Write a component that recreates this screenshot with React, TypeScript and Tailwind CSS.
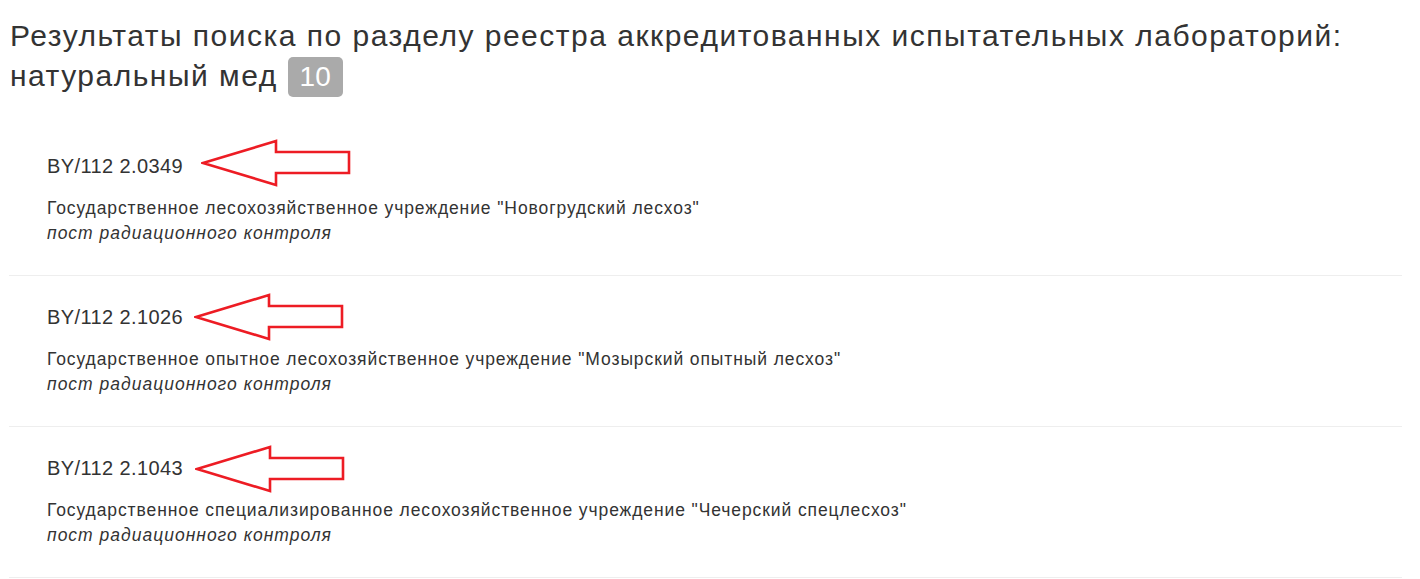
const results = [
  {
    id: "BY/112 2.0349",
    name: 'Государственное лесохозяйственное учреждение "Новогрудский лесхоз"',
    arrow: "left-[192px] top-[14px]",
  },
  {
    id: "BY/112 2.1026",
    name: 'Государственное опытное лесохозяйственное учреждение "Мозырский опытный лесхоз"',
    arrow: "left-[185px] top-[17px]",
  },
  {
    id: "BY/112 2.1043",
    name: 'Государственное специализированное лесохозяйственное учреждение "Чечерский спецлесхоз"',
    arrow: "left-[186px] top-[18px]",
  },
];

function Arrow({ className }: { className: string }) {
  return (
    <svg
      className={`absolute ${className}`}
      width="150"
      height="48"
      viewBox="0 0 150 48"
      fill="none"
    >
      <path
        d="M2 24 L75 2 L75 13 L148 13 L148 34 L75 34 L75 46 Z"
        stroke="#ed1c24"
        strokeWidth={2.6}
        strokeLinejoin="miter"
      />
    </svg>
  );
}

export default function App() {
  return (
    <div className="min-h-screen bg-white text-[#333] font-['Liberation_Sans',Arial,sans-serif]">
      <div className="ml-[9px] w-[1393px]">
        <h2 className="mt-[16px] pl-[1px] text-[30px] leading-[40px] font-normal tracking-[1.5px]">
          Результаты поиска по разделу реестра аккредитованных испытательных
          лабораторий: натуральный мед{" "}
          <span className="inline-block rounded-[5px] bg-[#aaaaaa] px-[12px] py-[6px] text-[28px] leading-none tracking-normal text-white">
            10
          </span>
        </h2>

        <div className="mt-[28px]">
          {results.map((r) => (
            <div
              key={r.id}
              className="relative border-b border-[#eeeeee] pl-[38px] pt-[30px] pb-[29px]"
            >
              <div className="text-[20px] leading-[22px] tracking-[0.4px]">
                {r.id}
              </div>
              <div className="mt-[19px] text-[17.5px] leading-[25px] tracking-[0.9px]">
                {r.name}
              </div>
              <div className="text-[17.5px] leading-[25px] italic tracking-[1px]">
                пост радиационного контроля
              </div>
              <Arrow className={r.arrow} />
            </div>
          ))}
        </div>
      </div>
    </div>
  );
}
